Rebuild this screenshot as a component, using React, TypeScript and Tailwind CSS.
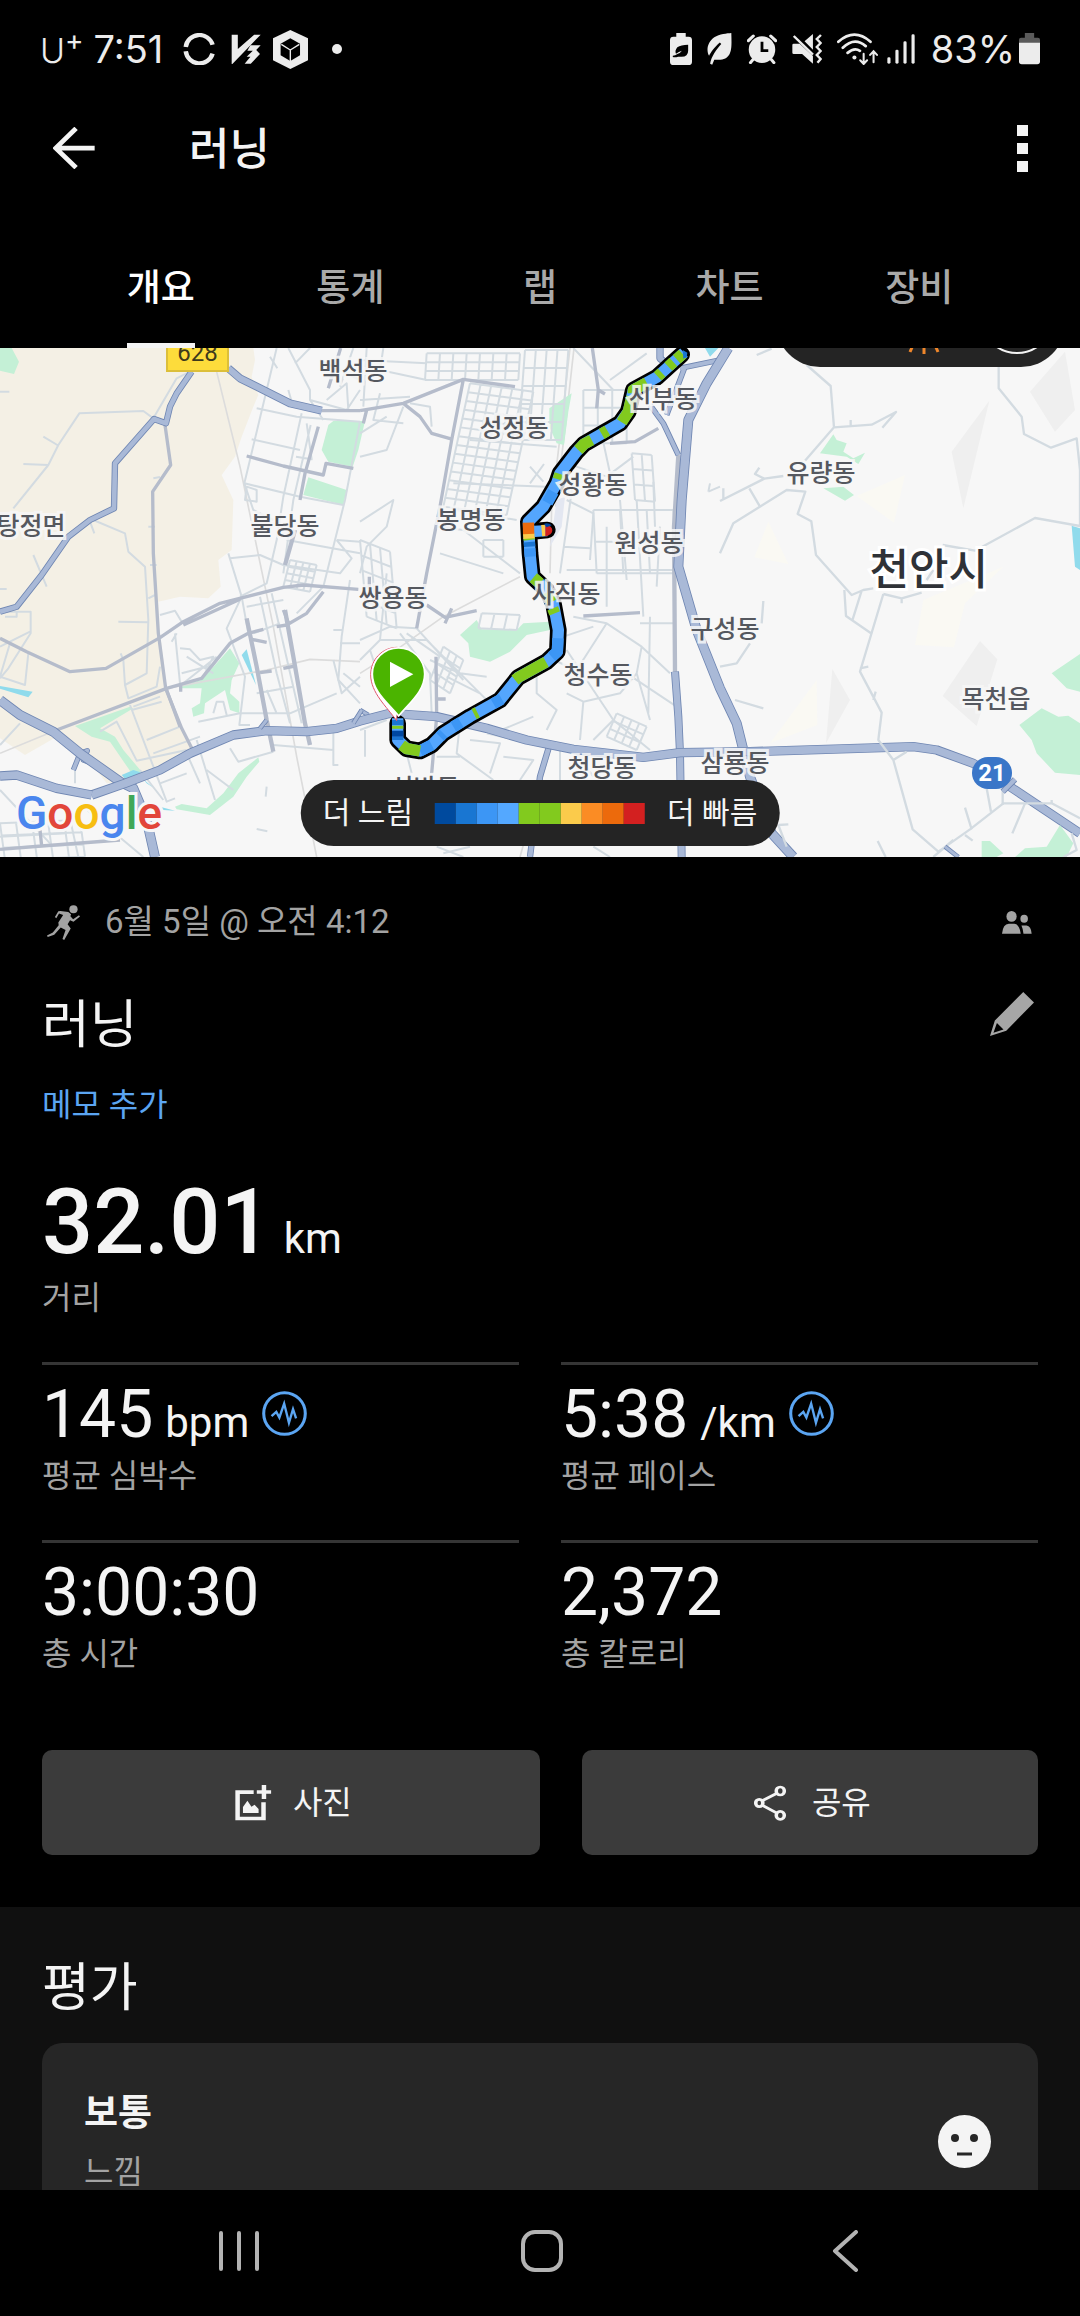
import type { ReactNode } from "react";

const tabs = ["개요", "통계", "랩", "차트", "장비"];

const legendColors = [
  "bg-[#004a9e]",
  "bg-[#1976d2]",
  "bg-[#3c96f5]",
  "bg-[#54a8ff]",
  "bg-[#82ca1e]",
  "bg-[#82ca1e]",
  "bg-[#fbcb4b]",
  "bg-[#fb8c24]",
  "bg-[#ec6a0c]",
  "bg-[#d32020]",
];

const stats = [
  { value: "145", unit: "bpm", label: "평균 심박수", zones: true },
  { value: "5:38", unit: "/km", label: "평균 페이스", zones: true },
  { value: "3:00:30", unit: "", label: "총 시간", zones: false },
  { value: "2,372", unit: "", label: "총 칼로리", zones: false },
];

// label centres, on a 1080 wide map
const places = [
  { name: "백석동", x: 353, y: 24 },
  { name: "성정동", x: 514, y: 81 },
  { name: "신부동", x: 663, y: 52 },
  { name: "성황동", x: 593, y: 138 },
  { name: "봉명동", x: 471, y: 173 },
  { name: "원성동", x: 649, y: 196 },
  { name: "사직동", x: 566, y: 247 },
  { name: "쌍용동", x: 393, y: 251 },
  { name: "청수동", x: 598, y: 328 },
  { name: "청당동", x: 602, y: 421 },
  { name: "삼룡동", x: 735, y: 416 },
  { name: "구성동", x: 725, y: 282 },
  { name: "탕정면", x: 31, y: 179 },
  { name: "불당동", x: 285, y: 179 },
  { name: "유량동", x: 821, y: 126 },
  { name: "목천읍", x: 996, y: 352 },
  { name: "신방동", x: 425, y: 441 },
];

function Icon({ box, className, children }: { box: string; className: string; children: ReactNode }) {
  return (
    <svg viewBox={box} preserveAspectRatio="none" className={className} fill="currentColor" aria-hidden="true">
      {children}
    </svg>
  );
}

// street grid: n lines along u and m lines along v
function block(x: number, y: number, ux: number, uy: number, vx: number, vy: number, n: number, m: number) {
  let d = "";
  for (let i = 0; i <= n; i++) {
    const t = i / n;
    d += `M${x + ux * t},${y + uy * t}l${vx},${vy}`;
  }
  for (let i = 0; i <= m; i++) {
    const t = i / m;
    d += `M${x + vx * t},${y + vy * t}l${ux},${uy}`;
  }
  return d;
}

function Highway({ d, w }: { d: string; w: number }) {
  return (
    <>
      <path d={d} stroke="#6f86b2" strokeWidth={w} />
      <path d={d} stroke="#a9b9d7" strokeWidth={w - 5} />
    </>
  );
}

function StatusBar() {
  return (
    <div className="flex h-[98px] shrink-0 items-center justify-between pr-10 pl-10 font-['Inter','Noto_Sans_CJK_KR',sans-serif] text-[38px] text-[#ececec]">
      <div className="flex items-center">
        <span className="flex items-start leading-[40px]">
          <span className="pt-1 text-[34px] font-light">U</span>
          <span className="text-[28px] leading-[26px]">+</span>
        </span>
        <span className="ml-[10px]">7:51</span>
        <Icon box="526 95 93 98" className="ml-5 h-8 w-8">
          <g fill="none" stroke="currentColor" strokeWidth="13">
            <path d="M534,138 A40,42 0 0 1 612,131" />
            <path d="M534,151 A40,42 0 0 0 612,158" />
          </g>
        </Icon>
        <Icon box="670 100 88 90" className="ml-4 h-[30px] w-[30px]">
          <path d="M672,102H690V145L738,102H757L674,190H672Z" />
          <path d="M727,134H757L744,148L755,160L728,189H710L727,168H716L734,150H718Z" />
        </Icon>
        <Icon box="796 87 101 117" className="ml-3 h-[39px] w-[35px]">
          <path d="M846,87L897,112V178L846,204L796,178V112Z" />
          <path d="M846,112L874,128V163L846,180L818,163V128Z" fill="#000" />
          <path d="M846,180V147L820,130M846,147L872,130" fill="none" stroke="currentColor" strokeWidth="4" />
        </Icon>
        <span className="ml-6 size-[10px] rounded-full bg-[#ececec]" />
      </div>
      <div className="flex items-center gap-[15px]">
        <Icon box="375 97 63 96" className="h-8 w-[22px]">
          <path d="M393,97H420V108H428Q438,108 438,118V183Q438,193 428,193H385Q375,193 375,183V118Q375,108 385,108H393Z" />
          <path d="M427,132V150Q427,168 408,168H398Q390,171 383,169V165Q390,165 396,160Q404,158 409,150Q400,153 392,159Q388,150 396,140Q406,132 427,132Z" fill="#000" />
        </Icon>
        <Icon box="487 97 72 97" className="h-8 w-[25px]">
          <path d="M557,97C558,140 562,178 520,178H508L502,193L496,190C499,168 515,145 528,130L524,126C508,140 497,158 493,166C484,150 488,125 508,110C523,100 545,98 557,97Z" />
        </Icon>
        <Icon box="603 100 86 90" className="h-[30px] w-[30px]">
          <ellipse cx="646" cy="147" rx="38" ry="40" />
          <path d="M646,123V150H664" fill="none" stroke="#000" strokeWidth="8" />
          <path d="M607,120L621,106M671,106L685,120M620,177L613,186M673,177L680,186" fill="none" stroke="currentColor" strokeWidth="9" strokeLinecap="round" />
        </Icon>
        <Icon box="735 100 86 90" className="h-[30px] w-[30px]">
          <path d="M740,129H757L795,166V189L764,160H740Q736,160 736,156V133Q736,129 740,129ZM771,122L795,100V147Z" />
          <path d="M740,106L795,162" stroke="currentColor" strokeWidth="7" />
          <path d="M818,103L806,115L817,127L806,139L817,151L806,163L817,175L808,186" fill="none" stroke="currentColor" strokeWidth="7" />
        </Icon>
        <Icon box="860 98 120 95" className="h-8 w-[41px]">
          <g fill="none" stroke="currentColor" strokeLinecap="round">
            <path d="M864,124Q911,82 958,124M877,142Q911,108 944,137M891,157Q911,140 927,151" strokeWidth="8" />
            <path d="M938,160V188M928,179L938,190L948,179M967,185V153M957,163L967,152L977,163" strokeWidth="6" />
          </g>
          <circle cx="911" cy="171" r="6" />
        </Icon>
        <div className="-ml-1.5 flex items-center">
          <Icon box="1008 100 80 90" className="h-[30px] w-[28px]">
            <rect x="1009" y="170" width="9" height="19" rx="4" />
            <rect x="1032" y="147" width="9" height="42" rx="4" />
            <rect x="1055" y="122" width="9" height="67" rx="4" />
            <rect x="1078" y="101" width="9" height="88" rx="4" />
          </Icon>
          <span className="ml-4">83%</span>
          <Icon box="1391 98 61 94" className="ml-1 h-8 w-[21px]">
            <path d="M1408,98H1435V112H1446Q1452,112 1452,118V130H1391V118Q1391,112 1397,112H1408Z" fill="#5a5a5a" />
            <path d="M1391,127H1452V182Q1452,190 1444,190H1399Q1391,190 1391,182Z" />
          </Icon>
        </div>
      </div>
    </div>
  );
}

function MapCanvas() {
  return (
    <svg viewBox="0 24 3240 1527" preserveAspectRatio="xMidYMid slice" className="h-full w-full" fill="none" strokeLinejoin="round" aria-hidden="true">
      <rect y="24" width="3240" height="1527" fill="#f7f7f7" />

      {/* west */}
      <path fill="#f4f0e5" d="M0,24H760L765,60L755,110L775,165L760,200L725,290L705,350L665,405L700,480L695,630L655,660L662,740L625,775L540,770L475,785L480,880L500,1040L540,1160L575,1225L470,1290L370,1325L320,1330L250,1240L170,1190L75,1245L0,1195Z" />
      <g fill="#c4f0d6">
        <path d="M0,24H35L57,65L42,102L0,92Z" />
        <path d="M985,255L1000,243H1095L1075,330L1058,380L985,365L965,330Z" />
        <path d="M925,412L1040,450L1030,495L910,465Z" />
        <path d="M690,925L718,970L695,1020L690,1060L718,1085V1120L690,1110L675,1050L615,1090L612,1120L580,1130L575,1105L600,1090L605,1045H545L540,1035L605,1020Z" />
        <path d="M225,1158L390,1100L400,1105L300,1165L345,1190L370,1230L425,1295L395,1300L330,1205L275,1190Z" />
        <path d="M525,1400L545,1392L620,1405L670,1360L715,1300L775,1252L778,1265L740,1310L700,1370L630,1425L530,1408Z" />
      </g>
      <g fill="#90dbec">
        <path d="M0,1038L98,1055L85,1072L0,1046Z" />
        <path d="M740,928L768,1035L725,945Z" />
        <path d="M365,1305L400,1290L430,1300L380,1322Z" />
        <path d="M430,1318L462,1345L440,1330ZM480,1400L525,1412L490,1410Z" />
      </g>
      <g stroke="#dcdcdc" strokeWidth="5">
        <path d="M650,95L720,380L820,860L890,1250L950,1551M0,1240L170,1170L500,1045L800,990L930,958L1080,965" />
        <path d="M1710,24L1685,250L1655,500L1650,700M1722,24L1697,250L1667,500M1560,710L1330,830L1160,950L1080,1000M1650,1230L1560,1551" />
      </g>
      <g stroke="#d3dbe1" strokeWidth="6">
        <path d="M40,505L145,375L175,315L238,220L430,213L460,235L530,115L570,95M130,290L172,315M70,372L145,375M0,155H28M0,747H20M270,545L283,580M100,645L140,740M460,415L480,411" />
        <path d="M280,540L375,580L385,635L435,680L445,840L440,1000L375,1035L370,960L362,940M355,845L445,847M445,775L465,765M445,560H465M450,675H470" />
        <path d="M0,815H92V880L25,985L0,1015M0,920L90,875M30,910L0,1010L75,1035L85,940M15,830H50V815M0,1215L60,1150M375,1035L385,1075L470,1040L480,980" />
        <path d="M300,1175L350,1145L410,1262L560,1230M390,1095L500,1385L525,1375M440,1200L540,1160M400,1100L480,1070M395,1110L485,1085M460,1240L600,1190M560,1240L600,1330M590,1200L645,1380M480,1330L560,1300M420,1290L490,1380" />
        <path d="M480,825L525,812L545,845M525,880L540,1030M540,925L570,928L600,960L640,950L610,1010M545,1000L640,975M550,1030L650,950M560,950L640,1000M515,905L530,880" />
        <path d="M830,24L745,380L733,430L760,510L820,540M770,205L890,230L1080,245M755,298L900,330M905,220L850,470L830,600L800,730L720,770M932,255L880,480L850,700M733,430L900,470L1030,495M1080,245L1035,480L970,740L890,820M888,350L935,358L920,250" />
        <path d="M740,440L735,480L770,485V450ZM865,24L930,150V180L970,240M885,70L930,24M865,150L875,185M810,50L832,85M930,180L1040,210L1080,150M960,60L1080,120M1020,140L1060,24M980,180L1040,130L1045,210" />
        <path d="M685,640L725,770L745,880M690,655L780,645L850,675L1020,700L1055,655L1010,600M860,600L1080,640M725,770L680,865L735,1010L718,1155H750M780,770L830,1000L870,1150M815,760L905,1150M1050,720L1025,890L1015,1020L1080,1090M1020,910H1080M1000,870H1025" />
        <path d="M595,1145L720,1120L870,1120L1010,1060M740,800L850,780M760,880L840,850M770,1060L880,1040M800,1050L830,1120M590,1230L700,1185M640,1120L650,1085L670,1085L680,1125M1000,1160V1275H1015M690,1225L715,1265L820,1235M620,1290L700,1350M820,1215L1000,1230M800,1340L797,1370M770,1467L802,1474M1010,600L1080,605M1000,960L1025,1060L1080,1010M1030,1000L1080,1040" />
        <path d={block(870, 660, 80, 15, -20, 80, 4, 4)} />
        <path d={block(0, 1450, 240, -10, 15, 110, 5, 3)} />
        <path d="M0,1350L150,1510M200,1390L235,1551M250,1400L430,1551M0,1490L200,1480M225,1290V1330" />
      </g>
      <g stroke="#b5bccb" strokeWidth="10">
        <path d="M495,255L512,375L458,455L460,640L475,880L497,1045L545,1165L578,1230" />
        <path d="M0,895L80,935L210,995L318,985L480,893L550,845L660,790L850,742L910,735L1075,748M550,855L720,778" />
        <path d="M170,1170L500,1045L605,1015L690,910L745,880L790,868M830,860L860,855L920,820L970,755M850,810L868,855M500,1050L540,1160M542,1030V1055" />
        <path d="M740,348L850,378L970,405L978,370L1060,385M955,260L915,400L900,480M750,897L800,907M780,998L815,993M850,985L885,978" />
        <path d="M885,570L855,675M740,835L770,980L800,1140L820,1235M855,810L880,950L915,1150L930,1215" strokeWidth="13" />
        <path d="M0,1528L125,1518L360,1500M118,1450L125,1518M965,212H1080M1022,24L985,145" />
      </g>
      <Highway d="M575,95L530,160L510,200L498,250L462,237L345,370L342,505L270,540L205,590L125,705L50,800L0,815" w={19} />
      <Highway d="M685,85L720,115L870,190L965,212" w={24} />
      <Highway d="M220,1290L240,1240L262,1232L250,1260L290,1275L360,1325" w={16} />
      <Highway d="M0,1080L60,1125L160,1175L240,1240L360,1325L400,1345L440,1440L465,1551" w={30} />

      {/* centre */}
      <g transform="translate(1080)">
        <path fill="#c4f0d6" d="M635,160L625,215L612,315L590,310L568,260V205ZM300,885L350,840L365,868L470,870L490,850L570,845V870L500,885L450,935L390,965L330,950L325,910Z" />
        <path fill="#e3e7f1" d="M590,480L615,470L605,560L570,620Z" />
        <g stroke="#d3dbe1" strokeWidth="6">
          <path d={block(330, 130, 190, 25, -80, 370, 6, 14)} />
          <path d={block(200, 40, 280, 0, -5, 80, 7, 3)} />
          <path d={block(495, 30, 130, 0, -20, 270, 4, 5)} />
          <path d={block(700, 510, 240, 0, 10, 190, 3, 2)} />
          <path d={block(815, 340, 60, 5, 10, 140, 2, 3)} />
          <path d={block(0, 600, 90, 35, 20, 230, 3, 5)} />
          <path d={block(670, 150, 130, 0, 0, 160, 3, 3)} />
          <path d={block(370, 600, 60, 0, 0, 50, 1, 1)} />
          <path d={block(365, 820, 115, 5, -10, 45, 3, 1)} />
          <path d={block(250, 920, 60, 40, -40, 100, 3, 4)} />
          <path d={block(770, 1120, 90, 40, -30, 70, 4, 3)} />
          <path d="M0,180L150,170M0,350L80,330L130,200M0,545L100,480L80,560L20,620L0,700M0,60L200,70M20,24L10,200M70,24L60,90L200,120M60,160L40,240L130,250M0,280L80,230M150,190L210,200L215,260" />
          <path d="M0,900L90,860L170,865M0,960L60,900L200,900L400,1100M60,900L80,700M170,865L310,1020M120,880L210,1000L215,1120M210,960L300,1000L380,1010M30,930L90,1110M140,880L240,950M260,1010L360,1060" />
          <path d="M230,560L310,570L480,700M290,510L470,540M240,640L430,700M330,300L590,320M280,430L560,440M510,380L550,425M510,430L552,372M620,480L700,520L690,660M640,420L600,700M620,690H940M610,620L690,625" />
          <path d="M620,370L740,410L820,350M640,24L760,150M750,120L860,40M720,260L750,400M880,425L885,560M740,560V800M830,480L850,830M780,480L800,720M900,560L890,740M1045,455L1080,440M1050,430L1045,455" />
          <path d="M640,830L740,850L845,920L930,1000M740,850L650,990L580,960M620,930L760,1140L700,1200M530,1010V1060L590,1110L560,1170M620,1060L670,1085L780,1060L830,1000L845,920M670,1085L660,1200M830,1000L870,1140M760,1140L870,1230M870,830L865,1120M800,1000L950,1100M610,890L700,860M840,850H940" />
          <path d="M0,1170L80,1140M15,1250V1170M300,1150L290,1240L400,1320M330,1200L420,1210L390,1300M430,1250L520,1260L480,1320M380,1180L510,1210M140,1240L155,1300M230,1250H300M600,1210V1320M650,1240L700,1310M520,1130L400,1180M230,1520L310,1551M250,1540L330,1520M700,1520L750,1551" />
        </g>
        <g stroke="#b5bccb" strokeWidth="10">
          <path d="M0,212L130,190L310,118L465,140M130,190L180,230L215,280L278,298M310,118L275,300L240,500L200,700L170,865M200,795L255,832L350,812M255,850L275,805M10,250L20,210M28,710V740" />
          <path d="M697,24L715,150L710,205M715,150L735,162M670,828L840,818M750,310L825,305L895,265M228,950L230,1130L215,1300M225,1077H257" />
          <path d="M955,345L942,560L945,1000" strokeWidth="13" />
        </g>
        <Highway d="M900,24V55L930,80" w={22} />
        <Highway d="M960,85L1080,60M975,80L920,225M870,195L910,250L955,345" w={17} />
        <Highway d="M1105,24L1040,130L985,240L965,480L955,680L1010,870L1080,1045L1130,1150L1170,1310L1235,1480L1300,1551" w={30} />
        <Highway d="M945,995L955,1130L960,1240L965,1551" w={24} />
        <Highway d="M570,1210L540,1310L510,1551" w={19} />
        <Highway d="M0,1110L25,1125" w={14} />
        <Highway d="M-805,1365L-705,1330L-600,1290L-510,1240L-380,1185L-280,1172L-160,1175L-70,1165L0,1143L90,1120L230,1130L380,1165L500,1200L640,1228L850,1252L960,1238L1170,1235L1660,1220L1730,1230L1840,1270L1950,1340L2160,1480" w={28} />
        <Highway d="M-1080,1308L-1030,1305L-910,1345L-805,1365" w={28} />
        <Highway d="M-300,1165L-280,1140M-20,1150L5,1110" w={14} />
      </g>

      {/* east */}
      <g transform="translate(2160)">
        <path fill="#efefef" d="M1035,35L1065,210L1005,275L930,155ZM808,182L730,505L695,335ZM780,903L832,958L770,1158L668,1068ZM337,987L390,1080L318,1210Z" />
        <path fill="#faf9f3" d="M555,405L522,548L410,468ZM145,545L205,672L103,652ZM610,780L850,680L735,790L702,922L585,915ZM290,1020L292,1155L150,1210Z" />
        <path fill="#c4f0d6" d="M340,283L350,300L380,310L370,335L400,355L435,338L415,372L380,350L300,340ZM310,445L370,440L402,465L375,482ZM1080,942L995,1000L1040,1045L1080,1055ZM965,1105L1015,1130L1045,1127L1080,1150V1305L1005,1298L950,1240L935,1200L898,1155ZM1020,1455L1060,1510L1040,1551H885L915,1525L980,1520ZM785,1503H810L850,1540L830,1551H785Z" />
        <path fill="#90dbec" d="M1055,557L1080,565V690L1065,680ZM-45,24H-5L-30,50Z" />
        <g stroke="#d3dbe1" strokeWidth="7">
          <path d="M260,75L332,138L342,262L255,362M342,262L455,254L528,216L487,263M392,240V256M190,408L133,416L0,483M118,383L105,402L133,416M88,445L120,500M10,445V478M110,45L155,26" />
          <path d="M0,640L40,550L200,450L256,455L233,522L274,544L288,645L395,765L430,750L460,745M373,750L378,828L453,880M425,752L398,838M490,762L545,775L605,758M545,775V790M620,720L640,690" />
          <path d="M490,762L420,995L485,1118L475,1200L520,1260L578,1468L655,1535L750,1468L850,1390H995L1080,1435M420,985L445,980M460,1080L467,1055M520,1260L560,1235M640,1551L700,1500" />
          <path d="M668,615L765,632L945,534L1080,558L1080,390L1070,295L993,323L912,282L905,230L836,145V80M130,783L125,850M90,910L50,970L0,980M45,1080L130,1105M735,1403L755,1468M735,1485L758,1502M915,1390L877,1480M848,1350V1395M800,1345L813,1415M175,1455L205,1453M175,1455L200,1520M473,1503L497,1551M1055,1480L1070,1530L1030,1551M995,1380V1392" />
        </g>
        <Highway d="M675,1520L715,1551" w={14} />
        <Highway d="M848,1355L885,1318" w={18} />
      </g>

      {/* route */}
      <g transform="translate(1080)" strokeLinecap="round">
        <g stroke="#000" strokeWidth="50">
          <path d="M113,1150V1200L140,1226L180,1233L215,1215L250,1180L330,1130L420,1080L475,1012L560,965L592,935L595,870L580,790L560,750L517,710L510,640L505,545L550,500L590,430L600,400L650,335L672,312L780,250L805,215L820,150L890,112L965,44" />
          <path d="M510,575L562,570" />
        </g>
        <g stroke="#54a6fe" strokeWidth="34" strokeLinecap="butt">
          <path d="M113,1135V1200L140,1226L180,1233L215,1215L250,1180L330,1130L420,1080L475,1012L560,965L592,935L595,870L580,790L560,750L517,710L510,640L505,545L550,500L590,430L600,400L650,335L672,312L780,250L805,215L820,150L890,112L972,38" />
          <path d="M510,575L562,572" />
          <path stroke="#3c96f5" d="M180,1233L215,1215M280,1160L302,1147M400,1091L425,1077M594,895L592,935L575,950M562,488L580,455M509,625L511,650M240,1190L250,1180" />
          <path stroke="#82ca1e" d="M125,1215L140,1226L180,1233M113,1157V1166M342,1122L352,1117M465,1020L475,1012L558,966M540,730L520,713M563,757L575,785M578,805L584,820M600,402L595,418M655,330L672,312L695,300M725,282L742,272M785,247L805,215L815,170M820,160V150L860,128M893,109L905,98M925,80L940,66M950,58L968,42M508,600L507,592" />
          <path stroke="#1a75d2" d="M113,1140V1155M113,1190V1200M508,606L509,620" />
          <path stroke="#0047a0" d="M113,1172V1190" />
          <path stroke="#fbcb4b" d="M506,580L507,596M545,572L556,571" />
          <path stroke="#ec6b0e" d="M505,548L506,582" />
        </g>
        <path d="M556,558Q563,552 572,560Q582,570 572,582Q562,590 556,588Z" fill="#d32020" />
        <path d="M552,552Q563,546 575,556L560,562Z" fill="#0047a0" />
        <path d="M968,30L982,38L980,52L970,56Z" fill="#1a75d2" />
      </g>

      {/* start pin */}
      <g transform="translate(1080)">
        <path d="M110,1142C80,1100 32,1058 32,1004C32,960 66,922 112,922L112,1100Z" fill="#fff" stroke="#e2546b" strokeWidth="3" />
        <path d="M116,1128C85,1090 37,1055 37,1002A78,78 0 0 1 194,1002C194,1055 146,1090 116,1128Z" fill="#4bb400" stroke="#fff" strokeWidth="5" />
        <path d="M90,965L160,1003L90,1041Z" fill="#fff" />
      </g>
    </svg>
  );
}

function RouteMap() {
  return (
    <section aria-label="지도" className="relative h-[509px] w-full overflow-hidden">
      <MapCanvas />

      {places.map((p) => (
        <span
          key={p.name}
          className="absolute -translate-x-1/2 -translate-y-1/2 text-[25px] leading-8 font-medium whitespace-nowrap text-[#55585f] [-webkit-text-stroke:6px_#f7f7f7d9] [paint-order:stroke_fill]"
          style={{ left: `${(p.x / 1080) * 100}%`, top: p.y }}
        >
          {p.name}
        </span>
      ))}
      <span className="absolute top-[222px] left-[86%] -translate-x-1/2 -translate-y-1/2 text-[43px] leading-[48px] font-medium whitespace-nowrap text-[#2f3237] [-webkit-text-stroke:6px_#ffffff] [paint-order:stroke_fill]">
        천안시
      </span>

      <span className="absolute -top-3 left-[166px] flex h-9 w-[63px] items-center justify-center border-2 border-[#dcbf3a] bg-[#fddc3b] pb-0.5 text-[24px] leading-6 text-[#3d3a1c]">628</span>
      <span className="absolute top-[409px] left-[972px] flex h-8 w-10 items-center justify-center rounded-full bg-[#3a76c8] text-[24px] leading-8 font-bold text-white">21</span>

      <div className="absolute -top-[69px] right-[15px] h-[88px] w-[289px] rounded-full bg-[#242424]">
        <svg viewBox="0 0 289 88" className="h-full w-full" fill="none">
          <path d="M137,66L134,73M148,66V75M159,66L162,73" stroke="#f0872b" strokeWidth="3" />
          <circle cx="241" cy="38" r="36" stroke="#f4f4f4" strokeWidth="2" />
        </svg>
      </div>

      <a
        href="#google"
        className="absolute bottom-[18px] left-4 text-[46px] leading-[52px] font-medium [-webkit-text-stroke:6px_#f7f7f7] [paint-order:stroke_fill]"
      >
        <span className="text-[#4a86ee]">G</span>
        <span className="text-[#e2463a]">o</span>
        <span className="text-[#f7be12]">o</span>
        <span className="text-[#4a86ee]">g</span>
        <span className="text-[#3fa757]">l</span>
        <span className="text-[#e2463a]">e</span>
      </a>

      <div className="absolute bottom-[11px] left-1/2 flex h-[66px] -translate-x-1/2 items-center gap-[22px] rounded-full bg-[#242424] px-[22px] text-[30px] leading-10 whitespace-nowrap text-[#f4f4f4]">
        <span>더 느림</span>
        <div className="flex">
          {legendColors.map((c, i) => (
            <span key={i} className={`h-[21px] w-[21px] ${c}`} />
          ))}
        </div>
        <span>더 빠름</span>
      </div>
    </section>
  );
}

export default function App() {
  return (
    <div className="flex h-screen flex-col bg-black font-['Roboto','Noto_Sans_CJK_KR',sans-serif] text-[#f4f4f4]">
      <StatusBar />

      <header className="shrink-0">
        <div className="flex h-[100px] items-center pr-[52px] pl-[53px]">
          <button aria-label="뒤로">
            <Icon box="154 382 122 127" className="size-[42px]">
              <path d="M275,446H162M221,386L162,446L221,505" fill="none" stroke="currentColor" strokeWidth="14" />
            </Icon>
          </button>
          <h1 className="ml-[94px] pt-1 text-[44px] leading-[52px] font-medium">러닝</h1>
          <button aria-label="더보기" className="ml-auto flex flex-col gap-[7px]">
            <span className="size-[11px] bg-[#f4f4f4]" />
            <span className="size-[11px] bg-[#f4f4f4]" />
            <span className="size-[11px] bg-[#f4f4f4]" />
          </button>
        </div>
        <nav className="flex h-[150px] items-end px-[66px]">
          {tabs.map((tab, i) => (
            <button key={tab} className="flex h-[119px] flex-1 justify-center text-[37px]">
              <span
                className={
                  i === 0
                    ? "flex h-full items-center border-b-[5px] border-[#f4f4f4] pt-[5px] font-medium text-white"
                    : "flex h-full items-center border-b-[5px] border-transparent pt-[5px] font-medium text-[#a9a9a9]"
                }
              >
                {tab}
              </span>
            </button>
          ))}
        </nav>
      </header>

      <main className="min-h-0 flex-1 overflow-hidden">
        <RouteMap />

        <section className="px-[42px] pt-[45px] pb-[52px]">
          <div className="flex h-10 items-center pr-[6px] text-[33px] leading-10 text-[#a3a3a3]">
            <Icon box="137 132 96 106" className="ml-[5px] h-[35px] w-[33px]">
              <circle cx="214" cy="145" r="12" />
              <path d="M176,150L199,153L207,160L205,166L213,175L230,163L233,167L214,183L204,178L197,190L206,203L187,238L182,235L191,208L177,200L158,222L139,229L137,224L154,215L171,193L170,185L184,162L172,158L164,172L160,168L170,151Z" />
            </Icon>
            <span className="ml-[25px]">6월 5일 @ 오전 4:12</span>
            <Icon box="1342 154 88 68" className="ml-auto h-[23px] w-[30px]">
              <ellipse cx="1370" cy="170" rx="15" ry="16" />
              <ellipse cx="1407" cy="177" rx="11" ry="12" />
              <path d="M1342,221Q1345,193 1362,192H1378Q1393,193 1397,221ZM1399,197H1414Q1427,198 1429,221H1405Q1404,208 1399,197Z" />
            </Icon>
          </div>

          <div className="mt-[52px] flex h-16 items-center justify-between pr-1">
            <h2 className="text-[52px] leading-[64px]">러닝</h2>
            <button aria-label="이름 편집" className="mb-6 text-[#a6a6a6]">
              <Icon box="1306 395 127 131" className="h-[44px] w-[44px]">
                <path d="M1402,395L1433,426L1353,510L1306,526L1320,480ZM1326,487L1316,516L1345,507Z" fillRule="evenodd" />
              </Icon>
            </button>
          </div>

          <button className="mt-[27px] block text-[32px] leading-10 text-[#5ba5f2]">메모 추가</button>

          <div className="mt-[50px]">
            <p className="flex items-baseline gap-3 text-[90px] leading-[96px] font-medium">
              32.01
              <span className="text-[42px] leading-none font-normal">km</span>
            </p>
            <p className="mt-[7px] text-[32px] leading-10 text-[#a3a3a3]">거리</p>
          </div>

          <div className="mt-11 grid grid-cols-2 gap-x-[42px]">
            {stats.map((s) => (
              <div key={s.label} className="h-[178px] border-t-[3px] border-[#353535] pt-[18px]">
                <div className="flex h-16 items-center">
                  <p className="flex items-baseline gap-3 text-[66px] leading-[64px]">
                    {s.value}
                    {s.unit && <span className="text-[42px] leading-none">{s.unit}</span>}
                  </p>
                  {s.zones && (
                    <button aria-label={`${s.label} 차트`} className="mb-1 ml-[13px] text-[#5ba5f2]">
                      <Icon box="760 152 132 136" className="size-[45px]">
                        <g fill="none" stroke="currentColor">
                          <ellipse cx="826" cy="220" rx="61" ry="63" strokeWidth="9" />
                          <path d="M788,228L802,215L811,232L825,190L839,248L851,207L860,235" strokeWidth="7" />
                        </g>
                      </Icon>
                    </button>
                  )}
                </div>
                <p className="mt-[9px] text-[32px] leading-10 text-[#a3a3a3]">{s.label}</p>
              </div>
            ))}
          </div>

          <div className="mt-8 flex gap-[42px] text-[32px]">
            <button className="flex h-[105px] flex-[12] items-center justify-center gap-[21px] rounded-[10px] bg-[#3b3b3b]">
              <Icon box="68 122 94 126" className="size-[42px]">
                <path d="M80,147H121V158H90V226H138V183H148V237H80ZM97,215V197L107,178L116,196L123,190L132,203V215Z" />
                <path d="M139,131H149V147H160V157H149V173H139V157H128V147H139Z" />
              </Icon>
              사진
            </button>
            <button className="flex h-[105px] flex-[11] items-center justify-center gap-[21px] rounded-[10px] bg-[#3b3b3b]">
              <Icon box="1232 126 94 126" className="size-[42px]">
                <g fill="none" stroke="currentColor" strokeWidth="8">
                  <ellipse cx="1255" cy="189" rx="8" ry="11" />
                  <ellipse cx="1302" cy="153" rx="9" ry="12" />
                  <ellipse cx="1302" cy="226" rx="9" ry="12" />
                  <path d="M1262,182L1294,160M1262,196L1294,219" />
                </g>
              </Icon>
              공유
            </button>
          </div>
        </section>

        <section className="bg-[#101010] px-[42px] pt-[50px] pb-12">
          <h2 className="text-[52px] leading-[64px]">평가</h2>
          <div className="mt-[22px] flex items-center justify-between rounded-[20px] bg-[#262626] pt-[47px] pr-[47px] pb-[43px] pl-[42px]">
            <div>
              <p className="text-[37px] leading-[48px] font-bold">보통</p>
              <p className="mt-[14px] text-[32px] leading-10 text-[#a3a3a3]">느낌</p>
            </div>
            <svg viewBox="0 0 53 53" className="size-[53px]" aria-hidden="true">
              <circle cx="26.5" cy="26.5" r="26.5" fill="#f4f4f4" />
              <circle cx="17" cy="23" r="4" fill="#262626" />
              <circle cx="36" cy="23" r="4" fill="#262626" />
              <path d="M19,39H34" stroke="#262626" strokeWidth="3" />
            </svg>
          </div>
        </section>
      </main>

      <nav className="flex h-[126px] shrink-0 items-center bg-black pr-21 pb-1 pl-22 text-[#b3b3b3]">
        <button aria-label="최근 앱" className="flex flex-1 justify-center">
          <svg viewBox="0 0 42 42" className="size-[42px]" stroke="currentColor" strokeWidth="4" strokeLinecap="round">
            <path d="M3,3V39M21,3V39M39,3V39" />
          </svg>
        </button>
        <button aria-label="홈" className="flex flex-1 justify-center">
          <svg viewBox="0 0 42 42" className="size-[42px]" fill="none" stroke="currentColor" strokeWidth="4">
            <rect x="2" y="2" width="38" height="38" rx="12" />
          </svg>
        </button>
        <button aria-label="뒤로 가기" className="flex flex-1 justify-center">
          <svg viewBox="0 0 42 42" className="size-[42px]" fill="none" stroke="currentColor" strokeWidth="4" strokeLinecap="round" strokeLinejoin="round">
            <path d="M32,2L11,21L32,40" />
          </svg>
        </button>
      </nav>
    </div>
  );
}
